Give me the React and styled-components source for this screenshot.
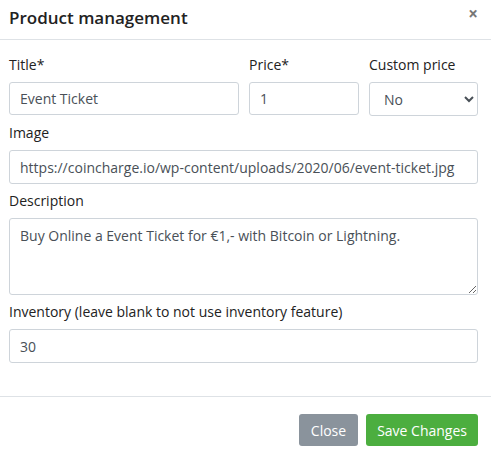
import React from "react";
import styled, { createGlobalStyle } from "styled-components";

const Global = createGlobalStyle`
  html, body { margin: 0; background: #fff; }
  body { font-family: "Open Sans", "Noto Sans", sans-serif; color: #212529; }
  * { box-sizing: border-box; }
`;

const Dialog = styled.div`
  width: 491px;
  height: 453px;
  display: flex;
  flex-direction: column;
  background: #fff;
`;

const Header = styled.div`
  height: 40px;
  border-bottom: 1px solid #dee2e6;
  display: flex;
  align-items: center;
  justify-content: space-between;
  padding: 0 13px 4px 9px;
`;

const Title = styled.h5`
  margin: 0;
  font-size: 17px;
  font-weight: 600;
  color: #222;
`;

const CloseX = styled.span`
  font-size: 17px;
  font-weight: 700;
  color: #777;
  margin-top: -8px;
`;

const Body = styled.div`
  flex: 1;
  padding: 15px 13px 0 9px;
  border-bottom: 1px solid #dee2e6;
`;

const Row = styled.div`
  display: grid;
  grid-template-columns: 230px 110px 109px;
  column-gap: 10px;
`;

const Group = styled.div`
  margin-bottom: 7px;
  display: flex;
  flex-direction: column;
`;

const Label = styled.label`
  font-size: 14px;
  line-height: 20px;
  margin-bottom: 7px;
  color: #222;
`;

const fieldCss = `
  width: 100%;
  border: 1px solid #ced4da;
  border-radius: 3px;
  font-family: "Open Sans", "Noto Sans", sans-serif;
  font-size: 14px;
  color: #495057;
  padding: 0 10px;
  background: #fff;
  outline: none;
`;

const Input = styled.input`
  ${fieldCss}
  height: ${p => p.$h || 34}px;
`;

const Select = styled.select`
  ${fieldCss}
  height: 34px;
  padding: 0 6px 0 10px;
`;

const Area = styled.textarea`
  ${fieldCss}
  height: 77px;
  padding: 7px 10px;
  resize: vertical;
  line-height: 20px;
`;

const Footer = styled.div`
  height: 56px;
  display: flex;
  justify-content: flex-end;
  align-items: flex-start;
  gap: 8px;
  padding: 17px 13px 0 0;
`;

const Button = styled.button`
  height: 32px;
  padding: 0 ${p => p.$px}px;
  border: none;
  border-radius: 3px;
  color: #fff;
  font-family: "Open Sans", "Noto Sans", sans-serif;
  font-size: 14px;
  background: ${p => p.$bg};
`;

export default function App() {
  return (
    <>
      <Global />
      <Dialog>
        <Header>
          <Title>Product management</Title>
          <CloseX>×</CloseX>
        </Header>
        <Body>
          <Row>
            <Group>
              <Label>Title*</Label>
              <Input $h={33} defaultValue="Event Ticket" />
            </Group>
            <Group>
              <Label>Price*</Label>
              <Input $h={33} defaultValue="1" />
            </Group>
            <Group>
              <Label>Custom price</Label>
              <Select defaultValue="No">
                <option>No</option>
                <option>Yes</option>
              </Select>
            </Group>
          </Row>
          <Group>
            <Label>Image</Label>
            <Input defaultValue="https://coincharge.io/wp-content/uploads/2020/06/event-ticket.jpg" />
          </Group>
          <Group>
            <Label>Description</Label>
            <Area defaultValue="Buy Online a Event Ticket for €1,- with Bitcoin or Lightning." />
          </Group>
          <Group>
            <Label>Inventory (leave blank to not use inventory feature)</Label>
            <Input defaultValue="30" />
          </Group>
        </Body>
        <Footer>
          <Button $bg="#8a939c" $px={12}>Close</Button>
          <Button $bg="#4cae3f" $px={11}>Save Changes</Button>
        </Footer>
      </Dialog>
    </>
  );
}
